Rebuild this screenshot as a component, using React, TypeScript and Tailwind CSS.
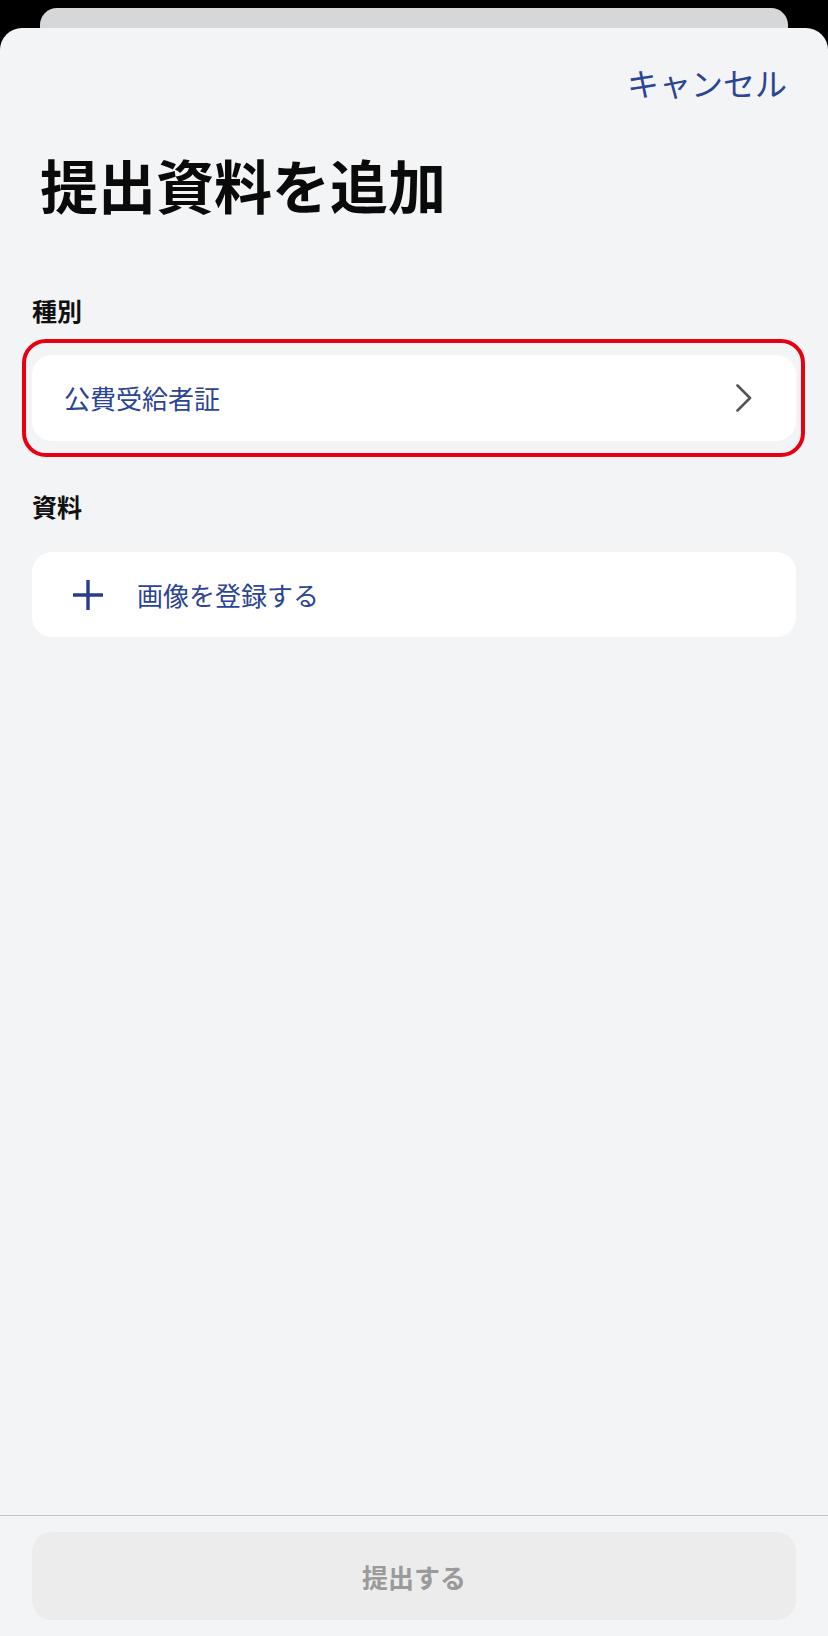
import React from "react";

const font = { fontFamily: '"Noto Sans CJK JP", "Noto Sans", sans-serif' };

function Chevron() {
  return (
    <svg width="16" height="28" viewBox="0 0 16 28" fill="none">
      <path d="M1.5 1.5 L14 14 L1.5 26.5" stroke="#555558" strokeWidth="2.6" strokeLinecap="round" strokeLinejoin="round" />
    </svg>
  );
}

function Plus() {
  return (
    <svg width="30" height="30" viewBox="0 0 30 30" fill="none">
      <path d="M15 0 V30 M0 15 H30" stroke="#2a3d8c" strokeWidth="3.4" />
    </svg>
  );
}

export default function App() {
  return (
    <div className="w-[828px] h-[1636px] bg-black flex flex-col overflow-hidden" style={font}>
      {/* sheet behind */}
      <div className="mx-[40px] mt-[8px] h-[20px] shrink-0 rounded-t-[17px] bg-[#d6d7d9]" />

      {/* current sheet */}
      <div className="flex-1 flex flex-col rounded-t-[22px] bg-[#f3f4f6]">
        <div className="flex justify-end pt-[34px] pr-[41px]">
          <span className="text-[32px] leading-[40px] text-[#2c4494]">キャンセル</span>
        </div>

        <h1 className="mt-[48px] pl-[40px] text-[58px] leading-[68px] font-bold text-[#0a0a0a]">
          提出資料を追加
        </h1>

        <div className="mt-[75px] pl-[32px] text-[25px] leading-[34px] font-bold text-[#111]">種別</div>

        <div className="relative mx-[32px] mt-[28px]">
          <div className="h-[86px] rounded-[20px] bg-white flex items-center justify-between pl-[32px] pr-[44px]">
            <span className="text-[26px] leading-[34px] text-[#2c4494]">公費受給者証</span>
            <Chevron />
          </div>
          {/* annotation ring */}
          <div className="absolute -left-[10px] -right-[9px] -top-[16px] -bottom-[16px] rounded-[24px] border-4 border-[#e60012] pointer-events-none" />
        </div>

        <div className="mt-[48px] pl-[32px] text-[25px] leading-[34px] font-bold text-[#111]">資料</div>

        <div className="mx-[32px] mt-[29px] h-[85px] rounded-[20px] bg-white flex items-center pl-[41px]">
          <Plus />
          <span className="ml-[34px] text-[26px] leading-[34px] text-[#2c4494]">画像を登録する</span>
        </div>

        <div className="flex-1" />

        <div className="border-t border-[#c4c4c7] px-[32px] py-[16px]">
          <button className="w-full h-[88px] rounded-[20px] bg-[#ececed] flex items-center justify-center text-[26px] font-bold text-[#9a9a9a]">
            提出する
          </button>
        </div>
      </div>
    </div>
  );
}
